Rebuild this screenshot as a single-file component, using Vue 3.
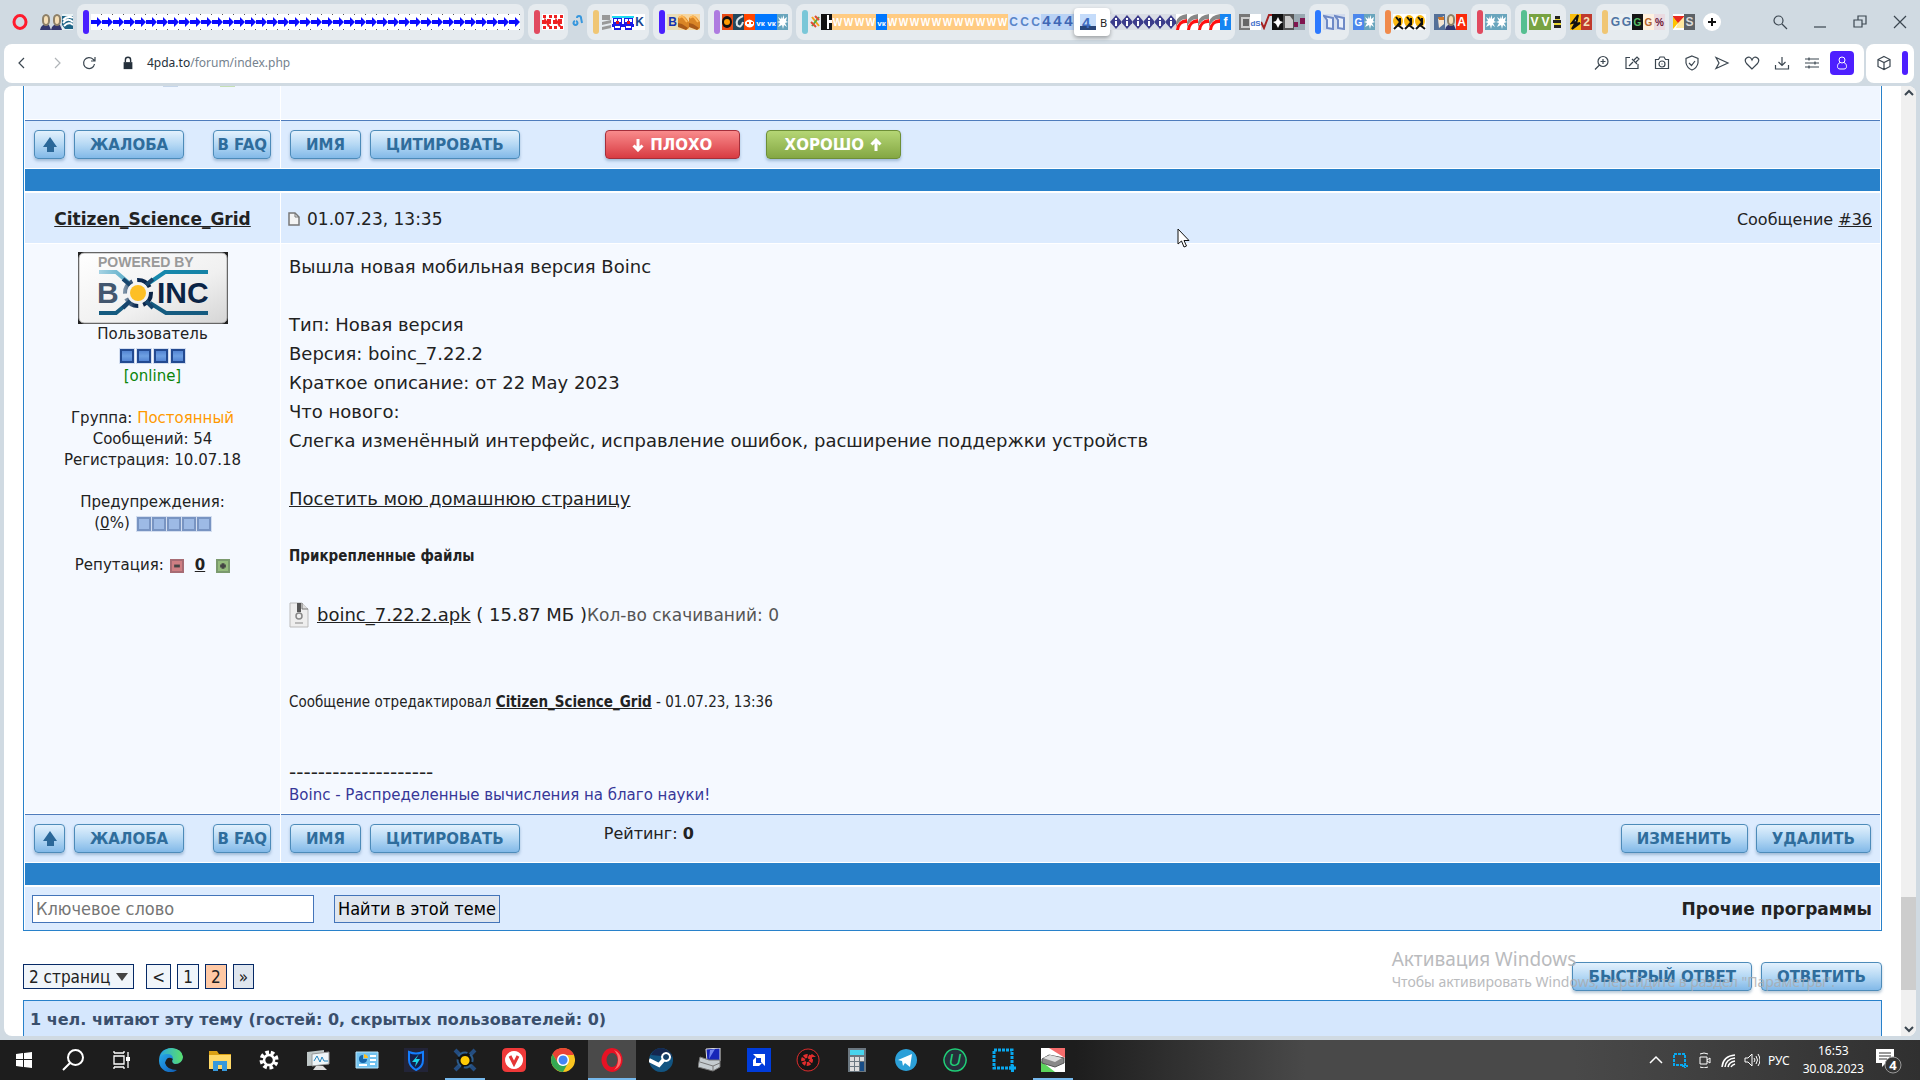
<template>
  <div class="desktop">
    <svg class="defs" aria-hidden="true">
      <defs>
        <linearGradient id="edgeG" x1="0" y1="0" x2="1" y2="1"><stop offset="0" stop-color="#2bb7e8" /><stop offset="0.5" stop-color="#1b84d8" /><stop offset="1" stop-color="#0c4a9c" /></linearGradient>
        <linearGradient id="edgeT" x1="0" y1="0" x2="1" y2="0"><stop offset="0" stop-color="#2aa9e0" /><stop offset="1" stop-color="#5be06a" /></linearGradient>
        <linearGradient id="steel" x1="0" y1="0" x2="1" y2="0"><stop offset="0" stop-color="#7a90a5" /><stop offset="0.4" stop-color="#0d2c54" /><stop offset="1" stop-color="#0b2446" /></linearGradient>
        <linearGradient id="aqua" x1="0" y1="0" x2="1" y2="0"><stop offset="0" stop-color="#a6d3e4" /><stop offset="0.5" stop-color="#1689ad" /><stop offset="1" stop-color="#1582a6" /></linearGradient>
        <linearGradient id="plate" x1="0" y1="0" x2="1" y2="1"><stop offset="0" stop-color="#ffffff" /><stop offset="0.6" stop-color="#f0f0f0" /><stop offset="1" stop-color="#d5d5d5" /></linearGradient>
      </defs>
    </svg>

    <div class="browser">
      <header class="tabs">
        <svg class="opera" viewBox="0 0 16 16"><ellipse cx="8" cy="8" rx="6" ry="6.5" fill="none" stroke="#ff1b2d" stroke-width="3" /></svg>
        <template v-for="(group, gi) in groups" :key="gi">
          <div :class="['group', { island: group.bar }]">
            <i v-if="group.bar" class="bar" :style="{ background: group.bar }"></i>
            <template v-for="(tab, ti) in expand(group.tabs)" :key="ti">
              <button v-if="tab === 'active'" class="active-tab" aria-label="Boinc">
                <svg viewBox="0 0 16 16"><rect width="16" height="16" fill="#c5dcfa" /><rect y="12" width="16" height="4" fill="#28457a" /><text x="2" y="14" class="glyph big" fill="#3f6cc0">4</text></svg>
                <span>B</span>
              </button>
              <svg v-else class="fav" viewBox="0 0 11 16">
                <rect v-if="icons[tab].bg" width="11" height="16" :fill="icons[tab].bg" />
                <path v-for="(shape, si) in icons[tab].shapes || []" :key="si" :d="shape[0]" :fill="shape[1]" :stroke="shape[2] || 'none'" stroke-width="2" />
                <text v-if="icons[tab].text" x="5.5" y="12" text-anchor="middle" :class="['glyph', icons[tab].size]" :fill="icons[tab].color">{{ icons[tab].text }}</text>
              </svg>
            </template>
          </div>
        </template>
        <button class="new-tab" aria-label="Новая вкладка"><svg viewBox="0 0 18 18"><path d="M9 5v8M5 9h8" stroke="#111" stroke-width="2" /></svg></button>
        <div class="window-buttons">
          <button v-for="icon in windowIcons" :key="icon.name" :aria-label="icon.name"><svg class="line" viewBox="0 0 16 16"><path :d="icon.d" /></svg></button>
        </div>
      </header>

      <div class="toolbar">
        <div class="address">
          <button aria-label="Назад"><svg class="line" viewBox="0 0 16 16"><path d="M10 3 5 8l5 5" /></svg></button>
          <button class="disabled" aria-label="Вперёд"><svg class="line" viewBox="0 0 16 16"><path d="m6 3 5 5-5 5" /></svg></button>
          <button aria-label="Обновить"><svg class="line" viewBox="0 0 16 16"><path d="M13.5 9A5.5 5.5 0 1 1 12 4.200L13.500 5.500M14 2v4h-4" /></svg></button>
          <svg class="lock" viewBox="0 0 16 16"><path d="M3 7h10v8H3z" fill="#25303b" /><path d="M5 7V4.500a3 3 0 0 1 6 0V7" fill="none" stroke="#25303b" stroke-width="1.600" /></svg>
          <a class="url" href="#"><b>4pda.to</b>/forum/index.php</a>
          <div class="tools">
            <button v-for="tool in tools" :key="tool.name" :aria-label="tool.name"><svg class="line" viewBox="0 0 16 16"><path :d="tool.d" /></svg></button>
            <button class="profile" aria-label="Профиль"><svg viewBox="0 0 16 16"><circle cx="8" cy="5" r="3" /><path d="M6 7.500C4 8.500 3.500 10 3.500 11.500c0 1.500.8 2.500 2.500 2.500h4c1.700 0 2.500-1 2.500-2.500 0-1.500-.5-3-2.500-4" /></svg></button>
          </div>
        </div>
        <div class="side">
          <button aria-label="Расширения"><svg class="line" viewBox="0 0 16 16"><path d="m8 1.500 6 3v7l-6 3-6-3v-7zM2 4.500l6 3 6-3M8 7.500v7" /></svg></button>
          <i></i>
        </div>
      </div>

      <div class="view">
        <main class="page">
          <section class="topic">
            <div class="cell prev"><i></i><i></i></div>
            <div class="cell prev"></div>
            <div class="cell controls">
              <button class="btn up" aria-label="Вверх"><svg viewBox="0 0 14 16"><path d="M7 0l7 10h-3v5H4v-5H0z" /></svg></button>
              <button class="btn">ЖАЛОБА</button>
              <button class="btn faq">В FAQ</button>
            </div>
            <div class="cell controls">
              <button class="btn">ИМЯ</button>
              <button class="btn">ЦИТИРОВАТЬ</button>
              <div class="votes">
                <button class="btn bad"><svg viewBox="0 0 12 14"><path d="M6 1v11M1.500 7.500 6 12l4.500-4.500" /></svg>ПЛОХО</button>
                <button class="btn good">ХОРОШО<svg viewBox="0 0 12 14"><path d="M6 13V2M1.500 6.500 6 2l4.500 4.500" /></svg></button>
              </div>
            </div>
            <div class="strip"></div>

            <div class="cell name"><a href="#">Citizen_Science_Grid</a></div>
            <div class="cell meta">
              <svg viewBox="0 0 12 14"><path d="M1 1h6l4 4v8H1z" fill="#f4f4f4" stroke="#777" stroke-width="1.500" /><path d="M7 1v4h4" fill="none" stroke="#777" /></svg>
              <span>01.07.23, 13:35</span>
              <span class="number">Сообщение <a href="#">#36</a></span>
            </div>

            <aside class="cell user">
              <svg class="avatar" viewBox="0 0 150 72">
                <rect width="150" height="72" fill="#222" />
                <rect x="1" y="1" width="148" height="70" rx="5" fill="url(#plate)" stroke="#aaa" />
                <text x="20" y="15" class="powered">POWERED BY</text>
                <path d="M21 20h17l13 11M130 20H87L71 31" fill="none" stroke="url(#aqua)" stroke-width="4" />
                <path d="M21 61h17l12-10M130 61H88L72 51" fill="none" stroke="#155b80" stroke-width="4" />
                <text x="19" y="51" class="boinc" fill="#43576f">B</text>
                <text x="79" y="51" class="boinc" fill="#0b2446">INC</text>
                <circle cx="60" cy="41" r="13" fill="none" stroke="url(#steel)" stroke-width="4" stroke-dasharray="15 5" />
                <path d="M45 27l7 6M75 27l-7 6M45 56l7-7M75 56l-7-7" stroke="#17456c" stroke-width="4" />
                <circle cx="60" cy="41" r="8" fill="#fdbf25" />
              </svg>
              <p>Пользователь</p>
              <p class="pips"><i v-for="n in 4" :key="n"></i></p>
              <p class="online">[online]</p>
              <p>&nbsp;</p>
              <p>Группа: <span class="status">Постоянный</span></p>
              <p>Сообщений: 54</p>
              <p>Регистрация: 10.07.18</p>
              <p>&nbsp;</p>
              <p>Предупреждения:</p>
              <p class="pips pale"><span>(<a href="#">0</a>%)</span><i v-for="n in 5" :key="n"></i></p>
              <p>&nbsp;</p>
              <p class="rep">
                <span>Репутация:</span>
                <button class="minus" aria-label="Понизить"><svg viewBox="0 0 14 14"><path d="M3 7h8" /></svg></button>
                <a href="#">0</a>
                <button class="plus" aria-label="Повысить"><svg viewBox="0 0 14 14"><path d="M7 3v8M3 7h8" /></svg></button>
              </p>
            </aside>
            <article class="cell post">
              <p v-for="(line, i) in lines" :key="i">{{ line || '\u00a0' }}</p>
              <p><a href="#">Посетить мою домашнюю страницу</a></p>
              <h4>Прикрепленные файлы</h4>
              <p class="file">
                <svg viewBox="0 0 20 26"><path d="M1 1h12l6 6v18H1z" fill="#eee" stroke="#bbb" /><path d="M13 1v6h6" fill="#ddd" stroke="#777" /><path d="M8 1h4v9H8z" fill="#555" /><circle cx="10" cy="14" r="3" fill="none" stroke="#888" stroke-width="1.500" /><path d="M6 21h8" stroke="#bbb" stroke-width="2" /></svg>
                <span><a href="#">boinc_7.22.2.apk</a> ( 15.87 МБ )<small>Кол-во скачиваний: 0</small></span>
              </p>
              <p class="edited">Сообщение отредактировал <a href="#">Citizen_Science_Grid</a> - 01.07.23, 13:36</p>
              <div class="signature">
                <p class="dashes">--------------------</p>
                <p class="motto">Boinc - Распределенные вычисления на благо науки!</p>
              </div>
            </article>

            <div class="cell controls">
              <button class="btn up" aria-label="Вверх"><svg viewBox="0 0 14 16"><path d="M7 0l7 10h-3v5H4v-5H0z" /></svg></button>
              <button class="btn">ЖАЛОБА</button>
              <button class="btn faq">В FAQ</button>
            </div>
            <div class="cell controls">
              <button class="btn">ИМЯ</button>
              <button class="btn">ЦИТИРОВАТЬ</button>
              <span class="rating">Рейтинг: <b>0</b></span>
              <div class="own">
                <button class="btn">ИЗМЕНИТЬ</button>
                <button class="btn">УДАЛИТЬ</button>
              </div>
            </div>
            <div class="strip"></div>
            <form class="search" @submit.prevent>
              <input v-model="keyword" type="text" placeholder="Ключевое слово" aria-label="Ключевое слово" />
              <button>Найти в этой теме</button>
              <a href="#">Прочие программы</a>
            </form>
          </section>

          <nav class="pager">
            <button class="pages">2 страниц<svg viewBox="0 0 12 8"><path d="M0 0h12L6 8z" /></svg></button>
            <a href="#">&lt;</a>
            <a href="#">1</a>
            <a href="#" class="current">2</a>
            <a href="#" class="last">»</a>
            <div class="reply">
              <button class="btn">БЫСТРЫЙ ОТВЕТ</button>
              <button class="btn">ОТВЕТИТЬ</button>
            </div>
          </nav>
          <div class="readers">1 чел. читают эту тему (гостей: 0, скрытых пользователей: 0)</div>
        </main>
        <div class="scroll">
          <svg class="line" viewBox="0 0 12 12"><path d="m2 8 4-4 4 4" /></svg>
          <i></i>
          <svg class="line" viewBox="0 0 12 12"><path d="m2 4 4 4 4-4" /></svg>
        </div>
      </div>
    </div>

    <footer class="taskbar">
      <button v-for="app in apps" :key="app.name" :class="['app', app.state]" :aria-label="app.name">
        <svg viewBox="0 0 24 24">
          <path v-for="(p, i) in app.paths" :key="i" :d="p[0]" :fill="p[1]" :stroke="p[2] || 'none'" :stroke-width="p[3] || 2" :stroke-dasharray="p[4]" />
          <text v-if="app.text" x="12" y="18" text-anchor="middle" class="app-letter" :fill="app.color">{{ app.text }}</text>
        </svg>
      </button>
      <div class="tray">
        <svg v-for="icon in tray" :key="icon.name" viewBox="0 0 16 16"><path :d="icon.d" :stroke="icon.color || '#fff'" :stroke-width="icon.w || 1" :stroke-dasharray="icon.dash" /></svg>
        <span class="lang">РУС</span>
        <span class="clock">16:53<br />30.08.2023</span>
        <svg class="note" viewBox="0 0 28 28">
          <path d="M2 3h18v14h-8l-4 4v-4H2z" fill="#fff" />
          <path d="M5 7h12M5 10h12M5 13h8" stroke="#333" />
          <circle cx="19" cy="19" r="8" fill="#333" stroke="#999" />
          <text x="19" y="24" text-anchor="middle">4</text>
        </svg>
      </div>
    </footer>

    <div class="watermark">
      <strong>Активация Windows</strong>
      <span>Чтобы активировать Windows, перейдите в раздел "Параметры".</span>
    </div>
    <svg class="cursor" viewBox="0 0 13 20"><path d="M1 1v15l3.500-3 2.500 6 2.500-1-2.500-5.500h5z" fill="#fff" stroke="#111" /></svg>
  </div>
</template>

<script setup>
import { ref } from 'vue';

const keyword = ref('');

const lines = [
  'Вышла новая мобильная версия Boinc',
  '',
  'Тип: Новая версия',
  'Версия: boinc_7.22.2',
  'Краткое описание: от 22 May 2023',
  'Что нового:',
  'Слегка изменённый интерфейс, исправление ошибок, расширение поддержки устройств',
  ''
];

// favicons are cut to 11px because the tabs are collapsed
const person = [['M3 11h6l2 5H0l1-3z', '#34386f'], ['M3 5a3 4 0 0 1 6 0v2a3 4 0 0 1-6 0z', '#f6dfb6', '#8d8069']];
const icons = {
  person: { shapes: person },
  waves: { bg: '#e9f2f5', shapes: [['M0 2h11v13H3L0 11z', '#1d6487'], ['M1 9q5-6 10-1M2 12q5-5 9-1M1 6q5-5 10-2', 'none', '#fff']] },
  arrow: { bg: '#fff', shapes: [['M0 6h6V3l5 5-5 5v-3H0z', '#0a0aff'], ['M11 0v1M11 15v1', 'none', '#555']] },
  dots: { bg: '#fff', shapes: [['M1 1h3v3H1zM7 1h3v3H7zM0 6h4v4H0zM5 5h4v5H5zM1 12h3v3H1zM7 12h3v3H7zM3 4l5 8-2 1-4-8z', '#ee2222']] },
  rings: { shapes: [['M5 4a2 2 0 1 1 4 0l1 5M3 7a2 2 0 1 0 1 0', 'none', '#3797dd']] },
  news: { shapes: [['M1 1h8v5H1zM1 8l9-2v3L1 11zM1 13l9-2v3l-9 2z', '#999']] },
  face: { bg: '#fff', shapes: [['M0 2h11v2H0z', '#20d8f0'], ['M1 4h9v6h1v3H9v3H2v-3H0v-3h1z', '#1919e8'], ['M2 5h3v3H2zM6 5h3v3H6zM3 12h5v2H3z', '#fff'], ['M4 7h3v3H4z', '#e01020']] },
  key: { bg: '#fff', text: 'K', color: '#14448f' },
  ball: { bg: '#e9ddb8', text: 'B', color: '#1330b0' },
  bun: { bg: '#f6d6a0', shapes: [['M0 4q4-5 8 0l3 4v6l-3 2-8-6z', '#d98526'], ['M0 9l4 1 6 4-2 2-8-3z', '#a95a18'], ['M1 4q3-3 5 0l3 4', 'none', '#ffb957']] },
  target: { bg: '#e84a14', shapes: [['M5 2a5 6 0 0 1 0 12A5 6 0 0 1 5 2z', '#111'], ['M5 5a3 3 0 0 1 0 6 3 3 0 0 1 0-6z', '#ff9d00']] },
  swirl: { bg: '#24475d', shapes: [['M10 2Q2 5 4 11q4 4 6-3', 'none', '#dce4e8']] },
  reddit: { bg: '#ff4500', shapes: [['M1 8q4-5 9 0v3q-4 5-9 0z', '#fff'], ['M3 8h2v2H3zM7 8h2v2H7z', '#ff4500']] },
  vk: { bg: '#0077ff', text: 'vк', color: '#fff', size: 'tiny' },
  splat: { bg: '#69a5bd', shapes: [['M4 2l1 3 2-4v4l3-2-1 4 2 1-3 1 2 4-3-2-1 4-1-4-4 2 2-4-3-1 3-1-2-4 3 2z', '#fff']] },
  joomla: { shapes: [['M2 3l7 9', 'none', '#f6a01a'], ['M9 3L2 12', 'none', '#5aa83c'], ['M5 2l4 4M6 13L1 8', 'none', '#e14d35']] },
  head: { bg: '#111', shapes: [['M6 1h2v5h3v3H8v6H6z', '#fff']] },
  w: { bg: '#ffcb82', text: 'W', color: '#fff', size: 'narrow' },
  c: { bg: '#dbe7fb', text: 'C', color: '#5a85c9' },
  four: { bg: '#b9d2f5', text: '4', color: '#3f67b5', size: 'big' },
  diamond: { bg: '#d8dce5', shapes: [['M6 1l6 7-6 7-6-7z', '#3c3c8c'], ['M5 4h2v2H5zM5 7h2v5H5z', '#fff']] },
  swoosh: { bg: '#fff', shapes: [['M0 8Q2 1 11 0v5Q4 4 0 13z', '#888'], ['M0 16Q1 6 11 5v4Q4 8 3 16z', '#ff1010']] },
  fb: { bg: '#1785f2', text: 'f', color: '#fff' },
  frame: { bg: '#777', shapes: [['M3 4h8v9H3z', '#666', '#ccc']] },
  ds: { bg: '#fff', text: 'dS', color: '#3f6fcb', size: 'tiny' },
  root: { shapes: [['M0 8l3 6L8 1h3', 'none', '#a52222']] },
  star: { bg: '#111', shapes: [['M6 3l2 4 3 1-3 2-2 4-2-4-3-2 3-1z', '#fff']] },
  doc: { bg: '#555', shapes: [['M2 2h5l3 4v8H2z', '#ccc']] },
  knobs: { bg: '#9aa9b2', shapes: [['M0 8h4v5H0zM6 4h5v6H6z', '#80164e']] },
  page: { bg: '#d3dcee', shapes: [['M1 2l9 2v11l-6-1V6z', '#e9effb', '#6e89c6']] },
  g: { bg: '#4d87ec', text: 'G', color: '#fff', size: 'narrow' },
  runner: { bg: '#fff', shapes: [['M5 1a5 6 0 0 1 0 12A5 6 0 0 1 5 1z', '#fdba12'], ['M3 3l4 5-3 4M7 4v7M1 15l4-4 5 4', 'none', '#111']] },
  portrait: { bg: '#547098', shapes: [['M4 5l6-3v8l-5 4z', '#f3e5d2'], ['M4 3h6v3H5z', '#d37625']] },
  adobe: { bg: '#fa2a0b', text: 'A', color: '#fff' },
  v: { bg: '#78a343', text: 'V', color: '#fff' },
  bee: { shapes: [['M4 2h5v3H4zM2 6h8v3H2zM3 11h7v3H3z', '#222'], ['M4 5h5v1H4zM3 9h7v2H3z', '#e7d632']] },
  warrior: { bg: '#f7bc0c', shapes: [['M8 1L2 9l4-1-4 7 8-6-4 1z', '#fff', '#111']] },
  red2: { bg: '#c03a2d', text: '2', color: '#f5e1bb' },
  cg: { bg: '#e9eff2', text: 'G', color: '#4f74a3' },
  dark: { bg: '#151515', text: 'G', color: '#5bbf69', size: 'narrow' },
  orange: { bg: '#fff1df', text: 'G', color: '#b6642c', size: 'narrow' },
  percent: { bg: '#eadbe1', text: '%', color: '#6d1434', size: 'narrow' },
  mail: { bg: '#fff', shapes: [['M0 2h11v1L5 10 0 3z', '#e92a20'], ['M0 3l5 6-5 6z', '#ffc400'], ['M5 9l6-6v11H3z', '#ffe9a0']] },
  globe: { bg: '#5d6267', text: 'S', color: '#dadada' }
};

const groups = [
  { tabs: ['person', 'person', 'waves'] },
  { bar: '#4a1fff', tabs: ['arrow*39'] },
  { bar: '#e14a5f', tabs: ['dots*2'] },
  { tabs: ['rings'] },
  { bar: '#f0c674', tabs: ['news', 'face*2', 'key'] },
  { bar: '#4a1fff', tabs: ['ball', 'bun*2'] },
  { bar: '#ae7be0', tabs: ['target', 'swirl', 'reddit', 'vk*2', 'splat'] },
  { bar: '#7ac7d8', tabs: ['joomla', 'head', 'w*4', 'vk', 'w*11', 'c*3', 'four*3', 'active', 'diamond*6', 'swoosh*4', 'fb'] },
  { tabs: ['frame', 'ds', 'root', 'star', 'doc', 'knobs'] },
  { bar: '#2c79ff', tabs: ['page*2'] },
  { tabs: ['g', 'splat'] },
  { bar: '#f08a4b', tabs: ['runner*3'] },
  { tabs: ['portrait', 'person', 'adobe'] },
  { bar: '#e14a5f', tabs: ['splat*2'] },
  { bar: '#56bf91', tabs: ['v*2', 'bee'] },
  { tabs: ['warrior', 'red2'] },
  { bar: '#f0c674', tabs: ['cg*2', 'dark', 'orange', 'percent'] },
  { tabs: ['mail', 'globe'] }
];

const expand = (tabs) => tabs.flatMap((tab) => {
  const [name, count] = tab.split('*');
  return Array(Number(count || 1)).fill(name);
});

const windowIcons = [
  { name: 'Поиск', d: 'M11 6.500a4.500 4.500 0 1 1-9 0 4.500 4.500 0 0 1 9 0zM10 10l5 5' },
  { name: 'Свернуть', d: 'M2 13h12' },
  { name: 'Восстановить', d: 'M2 6h8v7H2zM6 6V2h8v8h-4' },
  { name: 'Закрыть', d: 'M2 2l12 12M14 2 2 14' }
];

const tools = [
  { name: 'Масштаб', d: 'M14 6.500a5 5 0 1 1-10 0 5 5 0 0 1 10 0zM5.500 10 1 14.500M9 4v5M6.500 6.500h5' },
  { name: 'Заметки', d: 'M6 2.500H2v11h12V9M5 11l4-4M8 4l5 5M10 5l3-3 2 2-3 3' },
  { name: 'Снимок', d: 'M1.500 4.500h3L6 2h4l1.500 2.500h3v9h-13zM11 9a3 3 0 1 1-6 0 3 3 0 0 1 6 0zM7.500 9h1' },
  { name: 'Защита', d: 'M8 1l6 2.500V8q-1 5-6 7-5-2-6-7V3.500zM5 8l2.500 2.500L11 6' },
  { name: 'Мой поток', d: 'M2 2.500 14 8 2 13.500 5 8z' },
  { name: 'Закладки', d: 'M8 14 2.500 8.500Q0 5 2.500 3 6 .5 8 5q2-4.500 5.500-2 2.500 2 0 5.500z' },
  { name: 'Загрузки', d: 'M8 2v8M4.500 7 8 10.500 11.500 7M1.500 10v4h13v-4' },
  { name: 'Настройки', d: 'M1 4h14M1 8h14M1 12h14M5 2.500v3M11 6.500v3M5 10.500v3' }
];

const apps = [
  { name: 'Пуск', paths: [['M4 6l7-1v6H4zM12 5l8-1v7h-8zM4 12h7v7l-7-1zM12 12h8v8l-8-1z', '#fff']] },
  { name: 'Поиск', paths: [['M22 9.500a7.500 7.500 0 1 1-15 0 7.500 7.500 0 0 1 15 0zM9 15l-7 7', 'none', '#fff', 2]] },
  { name: 'Представление задач', paths: [['M4 8h10v8H4zM4 5V3M14 5V3M4 19v2M14 19v2M4 5h10M4 19h10M18 4v16', 'none', '#fff', 1.3], ['M16 9h4v4h-4z', '#fff']] },
  { name: 'Edge', paths: [['M0 13Q0 1 12 0q11 1 12 9-1 7-8 7-4-1-2-5Q8 7 6 15q2 7 12 7-5 4-12 1-6-4-6-10z', 'url(#edgeG)'], ['M1 9Q5 0 13 0q10 1 11 9-1 7-8 7-4-1-2-5 0-5-6-5-5 0-7 3z', 'url(#edgeT)']] },
  { name: 'Проводник', paths: [['M1 3h8l2 3h12v15H1z', '#dba114'], ['M1 7h22v14H1z', '#ffd968'], ['M5 13h14v10h-5v-6h-4v6H5z', '#3799db']] },
  { name: 'Параметры', paths: [['M12 4.500a7.500 7.500 0 1 0 .1 0z', 'none', '#fff', 4, '3.500 2.400'], ['M12 7a5 5 0 1 0 .1 0z', 'none', '#fff', 2.5]] },
  { name: 'Диспетчер', paths: [['M1 4l17-2v15L1 18z', '#bfc7c7'], ['M6 6l17-2v12L6 18z', '#eff6f9', '#999', 1], ['M8 13l3-5 3 6 2-5 2 4h4', 'none', '#2384bf', 1], ['M10 18h7l4 4H7z', '#ddd']] },
  { name: 'Панель управления', paths: [['M1 4h22v16H1z', '#72c3f0', '#b9e6fb', 1], ['M8 7a4 4 0 1 0 4 4H8z', '#1766ab'], ['M9 6v4h4q0-3-4-4z', '#ffbf23'], ['M15 8h6M15 12h6M4 17h8M15 16h5', 'none', '#fff', 2]] },
  { name: 'Защитник', paths: [['M0 0h24v24H0z', '#222438'], ['M5 4q7 3 14 0v8q0 7-7 10-7-4-7-10z', '#131f4c', '#137eff', 2], ['M15 6l-7 8h4l-1 5 5-8h-4z', '#1cd3e6']] },
  { name: 'BOINC', state: 'running', paths: [['M2 2l6 6M22 2l-6 6M2 22l6-6M22 22l-6-6', 'none', '#244d80', 4], ['M12 4.500a7.500 7.500 0 1 0 .1 0z', '#111', '#2d5c8c', 2, '8 3'], ['M12 8a4.500 4.500 0 1 0 .1 0z', '#ffcb05']] },
  { name: 'Vivaldi', paths: [['M5 0h14q5 0 5 5v14q0 5-5 5H5q-5 0-5-5V5q0-5 5-5z', '#ef3939'], ['M12 3a9 9 0 1 0 .1 0z', '#fff'], ['M8 8l4 8 4-8', 'none', '#e53535', 3]] },
  { name: 'Chrome', paths: [['M12 0a12 12 0 1 0 .1 0z', '#f9c41f'], ['M12 0Q4 0 1.500 6L7 15l5-8h11Q20 0 12 0z', '#ea4335'], ['M1.500 6Q-3 16 6 22q3 2 6 2l5-9-5 2-5-2z', '#34a853'], ['M12 6a6 6 0 1 0 .1 0z', '#fff'], ['M12 7.500a4.500 4.500 0 1 0 .1 0z', '#4285f4']] },
  { name: 'Opera', state: 'focused', paths: [['M12 2.500a8 9.500 0 1 0 .1 0z', 'none', '#e81224', 5], ['M14 2q7 3 7 10t-7 10q4-4 4-10T14 2z', '#ff6b69']] },
  { name: 'Steam', paths: [['M12 0a12 12 0 1 0 .1 0z', '#125481'], ['M12 0a12 12 0 0 1 11 9L2 7q3-7 10-7z', '#15274f'], ['M0 12l10 5 7-8', 'none', '#fff', 4], ['M17 5a4 4 0 1 0 .1 0z', '#153f69', '#fff', 2]] },
  { name: 'Компьютер', paths: [['M8 1l14-1v13L9 14z', '#1726b8', '#ddd', 1], ['M2 9l9 3h11v7l-7 4-15-4z', '#c5ccd0', '#777', 1], ['M2 14l13 4 7-3M15 18v5', 'none', '#777', 1], ['M12 2l5-1-6 10z', '#7184ef']] },
  { name: 'AMD', paths: [['M0 0h24v24H0z', '#003cdb'], ['M6 6h12v12l-4-4v-4h-4z', '#fff'], ['M6 12v6h6l3-3H9v-6z', '#fff']] },
  { name: 'Game Booster', paths: [['M12 1a11 11 0 1 0 .1 0z', '#151515', '#e12d2d', 1], ['M11 8a4 4 0 1 0 .1 0z', 'none', '#e12d2d', 4, '3 1'], ['M16 14V9h4l-4-3-4 3z', '#e12d2d']] },
  { name: 'Калькулятор', paths: [['M3 0h18v24H3z', '#6b7780'], ['M5 2h14v5H5z', '#48d4ed'], ['M5 9h4v4H5zM10 9h4v4h-4zM15 9h4v4h-4zM5 14h4v4H5zM10 14h4v4h-4zM5 19h4v4H5zM10 19h4v4h-4z', '#ddd'], ['M15 14h4v9h-4z', '#194d86']] },
  { name: 'Telegram', paths: [['M12 1a11 11 0 1 0 .1 0z', '#2ca0d8'], ['M4 12l14-6-2 13-5-4-2 3-1-5z', '#fff']] },
  { name: 'Uninstaller', text: 'U', color: '#20cf78', paths: [['M12 1a11 11 0 1 0 .1 0z', '#25303b', '#20cf78', 1.5]] },
  { name: 'Снимок области', paths: [['M2 2h18v18H2z', 'none', '#08a8ef', 3, '3 1'], ['M17 20h7M20.500 17v7', 'none', '#08a8ef', 3]] },
  { name: 'Диск', state: 'running', paths: [['M0 0h24v24H0z', '#fff'], ['M8 0h16v10z', '#f56c6c'], ['M0 13l14 11H0z', '#5cd45c'], ['M1 11l7-4 15 3v5l-9 4-13-4z', '#888', '#555', 1], ['M2 10l7-3 12 3-7 4z', '#ddd']] }
];

const tray = [
  { name: 'more', d: 'M2 11l6-6 6 6', w: 1.5 },
  { name: 'area', d: 'M2 2h11v11H2zM10 14h6M13 11v5', color: '#08a8ef', w: 2, dash: '3 1' },
  { name: 'camera', d: 'M4 5h7v7H4zM11 8l3-2v5l-3-2M4 2q4-2 8 0M4 15q4 2 8 0' },
  { name: 'wifi', d: 'M2 15Q3 4 15 3M5 15q1-8 10-9M8 15q1-5 7-6M11 15q1-2 4-3', w: 1.5 },
  { name: 'sound', d: 'M1 6h3l4-4v12l-4-4H1zM10 6q2 2 0 4M12 4q3 4 0 8M14 2q4 6 0 12' }
];
</script>

<style>
body {
  overflow: hidden;
}
</style>

<style scoped>
* {
  box-sizing: border-box;
}

button {
  font: inherit;
  color: inherit;
  background: none;
  border: none;
  padding: 0;
}

p, h4 {
  margin: 0;
}

a {
  color: #222;
}

.defs {
  position: absolute;
  width: 0;
  height: 0;
}

.desktop {
  position: relative;
  display: flex;
  flex-direction: column;
  height: 100vh;
  overflow: hidden;
  color: #222;
  font-family: "DejaVu Sans", sans-serif;
  font-size: 17px;
}

.browser {
  flex: 1;
  min-height: 0;
  display: flex;
  flex-direction: column;
  padding: 0 4px 4px;
  background: #d0dae2;
}

.line {
  width: 16px;
  height: 16px;
  fill: none;
  stroke: #3b4650;
  stroke-width: 1.2;
}

/* tabs */
.tabs {
  display: flex;
  align-items: center;
  gap: 4px;
  height: 44px;
  padding-left: 8px;
}

.opera {
  width: 16px;
  height: 16px;
  margin-right: 8px;
}

.group {
  display: flex;
  align-items: center;
  height: 36px;
}

.island {
  padding: 0 4px 0 6px;
  border-radius: 8px;
  background: #e6ebef;
}

.bar {
  width: 6px;
  height: 24px;
  margin-right: 2px;
  border-radius: 3px;
}

.fav {
  width: 11px;
  height: 16px;
}

.glyph {
  font: bold 12px "Liberation Sans", sans-serif;
}

.narrow {
  font-size: 10px;
}

.tiny {
  font-size: 8px;
}

.big {
  font-size: 15px;
}

.active-tab {
  display: flex;
  align-items: center;
  gap: 4px;
  width: 36px;
  height: 28px;
  padding-left: 6px;
  border-radius: 4px;
  background: #fff;
  box-shadow: 0 2px 4px #0005;
  font: 11px "Noto Sans", sans-serif;
}

.active-tab svg {
  width: 16px;
  height: 16px;
}

.new-tab {
  width: 18px;
  height: 18px;
  margin-left: 4px;
  border-radius: 9px;
  background: #fff;
}

.new-tab svg {
  display: block;
}

.window-buttons {
  display: flex;
  gap: 24px;
  margin-left: auto;
  padding-right: 8px;
}

.window-buttons button, .address button, .side button {
  display: flex;
}

/* address bar */
.toolbar {
  display: flex;
  gap: 2px;
  height: 39px;
  padding-right: 2px;
}

.address {
  flex: 1;
  display: flex;
  align-items: center;
  padding: 0 10px 2px;
  border-radius: 8px;
  background: #fff;
}

.address > button {
  margin-right: 19px;
}

.address .disabled {
  margin-right: 16px;
  opacity: 0.4;
}

.lock {
  width: 14px;
  height: 16px;
  margin: 0 12px 0 5px;
}

.url {
  color: #75828e;
  font: 12px "Noto Sans", sans-serif;
  text-decoration: none;
}

.url b {
  color: #25303b;
  font-weight: normal;
}

.tools {
  display: flex;
  align-items: center;
  gap: 14px;
  margin-left: auto;
}

.tools .profile {
  align-items: center;
  justify-content: center;
  width: 24px;
  height: 24px;
  margin-left: -4px;
  border-radius: 4px;
  background: #4d1fff;
}

.profile svg {
  width: 16px;
  height: 16px;
  fill: none;
  stroke: #fff;
}

.side {
  display: flex;
  align-items: center;
  justify-content: space-between;
  width: 48px;
  padding: 0 6px 2px 10px;
  border-radius: 8px;
  background: #fff;
}

.side i {
  width: 6px;
  height: 24px;
  border-radius: 3px;
  background: #4d1fff;
}

/* page */
.view {
  flex: 1;
  display: flex;
  min-height: 0;
  margin-top: 3px;
  border-radius: 8px;
  overflow: hidden;
  background: #fff;
}

.page {
  flex: 1;
  padding: 0 19px;
  overflow: hidden;
}

.topic {
  display: grid;
  grid-template-columns: 255px 1fr;
  column-gap: 1px;
  padding: 0 1px;
  border: 1px solid #2881ca;
  border-top: none;
}

.cell {
  background: #dcebfe;
}

.prev {
  display: flex;
  gap: 42px;
  height: 33px;
  margin-bottom: 1px;
  padding-left: 138px;
  background: #f0f6ff;
}

.prev i {
  width: 15px;
  height: 1px;
  background: #c6d6ea;
}

.prev i + i {
  background: #c5dfb5;
}

.prev + .prev i {
  display: none;
}

.controls {
  display: flex;
  align-items: center;
  gap: 9px;
  height: 48px;
  padding: 0 9px;
  border-top: 1px solid #4f7cbc;
}

.btn {
  display: inline-flex;
  align-items: center;
  justify-content: center;
  gap: 6px;
  height: 29px;
  padding: 0 15px;
  border: 1px solid #4d8bb9;
  border-radius: 4px;
  background: linear-gradient(#e3f1fd, #b5d8f4 50%, #82b9e8);
  box-shadow: 0 2px 3px #2b5c8a55;
  color: #2f6d9c;
  font-size: 15px;
  font-weight: bold;
  white-space: nowrap;
}

.btn svg {
  width: 12px;
  height: 14px;
  fill: none;
  stroke: #fff;
  stroke-width: 3;
}

.btn.up {
  width: 31px;
  padding: 0;
}

.btn.up svg {
  width: 14px;
  height: 16px;
  fill: #2b6899;
  stroke: none;
}

.faq {
  margin-left: auto;
  padding: 0 3px;
}

.votes {
  display: flex;
  gap: 26px;
  margin-left: 76px;
}

.votes .btn {
  width: 135px;
  color: #fff;
}

.btn.bad {
  border-color: #a52f3b;
  background: linear-gradient(#f98b8c, #d83b42);
}

.btn.good {
  border-color: #6e8f37;
  background: linear-gradient(#b5d675, #84a743);
}

.strip {
  grid-column: 1 / 3;
  height: 22px;
  margin: 1px 0 2px;
  background: #2881ca;
}

.name, .meta {
  display: flex;
  align-items: center;
  height: 50px;
  margin-bottom: 1px;
  padding-top: 2px;
}

.name {
  justify-content: center;
  font-weight: bold;
}

.meta {
  gap: 7px;
  padding-left: 7px;
  padding-right: 8px;
}

.meta svg {
  width: 12px;
  height: 14px;
}

.number {
  margin-left: auto;
  font-size: 16px;
}

.user, .post {
  height: 569px;
  margin-bottom: 1px;
  padding-top: 8px;
  background: #f5f9ff;
}

.user {
  font-size: 15px;
  line-height: 21px;
  text-align: center;
}

.avatar {
  display: block;
  width: 150px;
  height: 72px;
  margin: 0 auto;
}

.powered {
  fill: #999;
  font: bold 14px "Liberation Sans", sans-serif;
}

.boinc {
  font: bold 30px "Liberation Sans", sans-serif;
}

.pips {
  display: flex;
  align-items: center;
  justify-content: center;
  gap: 3px;
  height: 21px;
}

.pips i {
  width: 14px;
  height: 14px;
  border: 2px solid #234a91;
  outline: 1px solid #d3def0;
  background: linear-gradient(#5485d3, #6ea0e3, #5485d3);
}

.pale {
  gap: 1px;
}

.pale span {
  margin-right: 6px;
}

.pale i {
  border-color: #7894c2;
  background: #9dbae5;
}

.online {
  color: #0b850b;
}

.status {
  color: #ff9900;
}

.rep {
  display: flex;
  align-items: center;
  justify-content: center;
  gap: 6px;
}

.rep a {
  margin: 0 5px;
  font-weight: bold;
}

.rep button {
  width: 14px;
  height: 14px;
  border: 2px solid #a76c74;
  background: #cf7f83;
}

.rep .plus {
  border-color: #7b9a6e;
  background: #95bb7d;
}

.rep svg {
  display: block;
  stroke: #444;
  stroke-width: 4;
}

.post {
  padding-left: 8px;
  font-size: 18px;
  line-height: 29px;
}

.post h4 {
  margin: 29px 0;
  font-family: "DejaVu Sans Condensed", "DejaVu Sans", sans-serif;
  font-size: 15px;
}

.file {
  display: flex;
  align-items: center;
  gap: 8px;
}

.file svg {
  width: 20px;
  height: 26px;
}

.file small {
  color: #555;
  font-size: 17px;
}

.post .edited {
  margin-top: 58px;
  font-family: "DejaVu Sans Condensed", "DejaVu Sans", sans-serif;
  font-size: 15px;
}

.edited a {
  font-weight: bold;
}

.signature {
  margin-top: 44px;
  font-size: 15px;
  line-height: 23px;
}

.dashes {
  font-size: 20px;
}

.motto {
  color: #373798;
}

.rating {
  align-self: flex-start;
  margin: 9px 0 0 75px;
  font-size: 16px;
}

.own {
  display: flex;
  gap: 8px;
  margin-left: auto;
}

.search {
  grid-column: 1 / 3;
  display: flex;
  align-items: center;
  gap: 20px;
  height: 43px;
  padding: 0 8px 0 7px;
  background: #dcebfe;
}

.search input, .search button {
  height: 28px;
  padding: 0 3px;
  border: 1px solid #4374b9;
  background: #fff;
  font: 18px "DejaVu Sans Condensed", sans-serif;
}

.search input {
  width: 282px;
}

.search button {
  background: #dfe6ef;
  color: #000;
}

.search a {
  margin-left: auto;
  font-weight: bold;
  text-decoration: none;
}

.pager {
  display: flex;
  align-items: center;
  gap: 6px;
  margin-top: 31px;
  height: 29px;
}

.pager > a, .pages {
  display: flex;
  align-items: center;
  height: 25px;
  padding: 0 5px;
  border: 1px solid #072a66;
  background: #f0f5fa;
  font-family: "DejaVu Sans Condensed", sans-serif;
  text-decoration: none;
}

.pager > .pages {
  gap: 6px;
  margin-right: 6px;
}

.pages svg {
  width: 12px;
  height: 8px;
  fill: #444;
}

.pager .current {
  background: #ffc9a5;
}

.pager .last {
  background: #dfe6ef;
}

.reply {
  display: flex;
  gap: 9px;
  margin-left: auto;
}

.readers {
  height: 60px;
  margin-top: 9px;
  padding: 0 6px;
  border: 1px solid #2881ca;
  background: #d5e7fd;
  color: #3a4f6c;
  font-size: 16px;
  font-weight: bold;
  line-height: 37px;
}

.scroll {
  display: flex;
  flex-direction: column;
  align-items: center;
  width: 15px;
  background: #f0f0f0;
}

.scroll svg {
  width: 12px;
  height: 14px;
  stroke-width: 2;
}

.scroll i {
  width: 100%;
  height: 93px;
  margin: auto 0 32px;
  background: #cdcdcd;
}

/* taskbar */
.taskbar {
  display: flex;
  gap: 1px;
  height: 40px;
  background: linear-gradient(90deg, #1d1d1d 56%, #494949 68%, #494949 82%, #303030);
  color: #fff;
}

.app {
  display: flex;
  align-items: center;
  justify-content: center;
  width: 48px;
}

.app svg {
  width: 24px;
  height: 24px;
}

.app-letter {
  font: italic 17px "Liberation Sans", sans-serif;
}

.running {
  background: linear-gradient(#76b9ed, #76b9ed) bottom / 40px 2px no-repeat;
}

.focused {
  background: linear-gradient(#76b9ed, #76b9ed) bottom / 100% 2px no-repeat #4a4a4a;
}

.tray {
  display: flex;
  align-items: center;
  gap: 8px;
  margin-left: auto;
  padding-right: 18px;
  font: 12px "Noto Sans", sans-serif;
}

.tray svg {
  width: 16px;
  height: 16px;
  fill: none;
}

.clock {
  margin: 0 2px 0 5px;
  line-height: 18px;
  text-align: center;
}

.tray .note {
  width: 28px;
  height: 28px;
}

.note text {
  fill: #fff;
  font: bold 13px "Noto Sans", sans-serif;
}

/* overlays */
.watermark {
  position: absolute;
  right: 85px;
  bottom: 89px;
  display: flex;
  flex-direction: column;
  color: #a9abae;
  opacity: 0.8;
  font: 14px "Noto Sans", sans-serif;
  pointer-events: none;
}

.watermark strong {
  font-size: 19px;
  font-weight: normal;
}

.cursor {
  position: absolute;
  left: 1177px;
  top: 228px;
  width: 13px;
  height: 20px;
}
</style>
